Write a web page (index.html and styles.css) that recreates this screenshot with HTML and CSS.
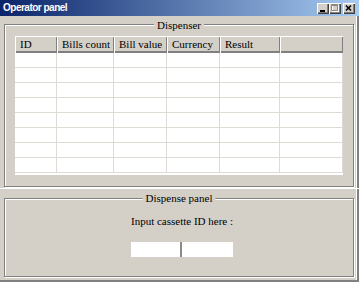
FILE: index.html
```html
<!DOCTYPE html>
<html>
<head>
<meta charset="utf-8">
<link rel="stylesheet" href="styles.css">
</head>
<body>
<div class="window">
  <div class="titlebar">
    <span class="title">Operator panel</span>
    <div class="tbuttons">
      <div class="tbtn"><svg width="12" height="11" viewBox="0 0 12 11"><rect x="3" y="7" width="5" height="2" fill="#000"/></svg></div>
      <div class="tbtn"><svg width="12" height="11" viewBox="0 0 12 11"><path d="M3.5 2.5h6v6h-6z" fill="none" stroke="#fff"/><path d="M2.5 1.5h6v6h-6z M2.5 2.5h6" fill="none" stroke="#8c8a85"/></svg></div>
      <div class="tbtn close"><svg width="12" height="11" viewBox="0 0 12 11"><path d="M3 2.5l5 5M8 2.5l-5 5" stroke="#000" stroke-width="1.6" fill="none"/></svg></div>
    </div>
  </div>
  <div class="panel top">
    <div class="group g1">
      <span class="legend l1">Dispenser</span>
      <div class="grid">
        <div class="hcell">ID</div>
        <div class="hcell">Bills count</div>
        <div class="hcell">Bill value</div>
        <div class="hcell">Currency</div>
        <div class="hcell">Result</div>
        <div class="hcell"></div>
        <div class="cell"></div><div class="cell"></div><div class="cell"></div><div class="cell"></div><div class="cell"></div><div class="cell"></div>
        <div class="cell"></div><div class="cell"></div><div class="cell"></div><div class="cell"></div><div class="cell"></div><div class="cell"></div>
        <div class="cell"></div><div class="cell"></div><div class="cell"></div><div class="cell"></div><div class="cell"></div><div class="cell"></div>
        <div class="cell"></div><div class="cell"></div><div class="cell"></div><div class="cell"></div><div class="cell"></div><div class="cell"></div>
        <div class="cell"></div><div class="cell"></div><div class="cell"></div><div class="cell"></div><div class="cell"></div><div class="cell"></div>
        <div class="cell"></div><div class="cell"></div><div class="cell"></div><div class="cell"></div><div class="cell"></div><div class="cell"></div>
        <div class="cell"></div><div class="cell"></div><div class="cell"></div><div class="cell"></div><div class="cell"></div><div class="cell"></div>
        <div class="cell"></div><div class="cell"></div><div class="cell"></div><div class="cell"></div><div class="cell"></div><div class="cell"></div>
      </div>
    </div>
  </div>
  <div class="panel bottom">
    <div class="group g2">
      <span class="legend l2">Dispense panel</span>
      <div class="dispense">
        <div class="prompt">Input cassette ID here :</div>
        <div class="inputs">
          <div class="box b1"></div>
          <div class="box b2"></div>
        </div>
      </div>
    </div>
  </div>
</div>
</body>
</html>
```
FILE: styles.css
```css
html, body {
  margin: 0;
  padding: 0;
  background: #d4d0c8;
}
.window {
  width: 359px;
  height: 282px;
  display: flex;
  flex-direction: column;
  background: #d4d0c8;
  box-shadow: inset -2px 0 0 #808080, inset -3px 0 0 #fff;
  font-family: "Liberation Serif", "Times New Roman", serif;
  font-size: 11px;
  color: #000;
  overflow: hidden;
}
.titlebar {
  height: 16px;
  flex: none;
  display: flex;
  align-items: flex-start;
  justify-content: space-between;
  background: linear-gradient(to right, #0a246a, #a6caf0);
}
.title {
  font-family: "Liberation Sans", Arial, sans-serif;
  font-weight: bold;
  font-size: 10px;
  letter-spacing: -0.5px;
  color: #fff;
  line-height: 16px;
  padding-left: 3px;
}
.tbuttons {
  display: flex;
  margin-top: 3px;
  margin-right: 4px;
}
.tbtn {
  width: 12px;
  height: 11px;
  background: #d4d0c8;
  box-shadow: inset 1px 1px 0 #fff, inset -1px -1px 0 #404040, inset -2px -2px 0 #808080;
  display: flex;
}
.tbtn.close {
  margin-left: 2px;
}
.panel {
  flex: none;
  box-sizing: border-box;
}
.panel.top {
  height: 172px;
  padding: 8px 0 0 4px;
}
.panel.bottom {
  height: 94px;
  border-top: 1px solid #fff;
  border-bottom: 2px solid #808080;
  padding: 9px 0 0 4px;
}
.group {
  position: relative;
  box-sizing: border-box;
  width: 350px;
  border: 1px solid #808080;
  box-shadow: inset 1px 1px 0 #fff, 1px 1px 0 #fff;
}
.g1 {
  height: 163px;
  padding: 11px 10px;
}
.g2 {
  height: 79px;
}
.legend {
  position: absolute;
  left: 50%;
  transform: translateX(-50%);
  background: #d4d0c8;
  padding: 0 3px;
  line-height: 13px;
  white-space: nowrap;
}
.l1 {
  top: -6px;
}
.l2 {
  top: -7px;
}
.grid {
  width: 328px;
  height: 139px;
  background: #fff;
  display: grid;
  grid-template-columns: 42px 57px 53px 53px 60px 63px;
  grid-template-rows: 17px repeat(8, 15px);
}
.hcell {
  background: #d4d0c8;
  box-shadow: inset 1px 1px 0 #fff, inset -1px -2px 0 #808080;
  line-height: 16px;
  padding-left: 5px;
  white-space: nowrap;
  overflow: hidden;
}
.cell {
  box-shadow: inset -1px -1px 0 #dedbd4;
}
.dispense {
  display: flex;
  flex-direction: column;
  align-items: center;
  padding-left: 6px;
}
.prompt {
  margin-top: 16px;
  line-height: 13px;
}
.inputs {
  margin-top: 14px;
  display: flex;
  height: 15px;
}
.box {
  background: #fff;
  height: 15px;
}
.b1 {
  width: 49px;
  border-right: 2px solid #8c8a85;
}
.b2 {
  width: 51px;
}
```
